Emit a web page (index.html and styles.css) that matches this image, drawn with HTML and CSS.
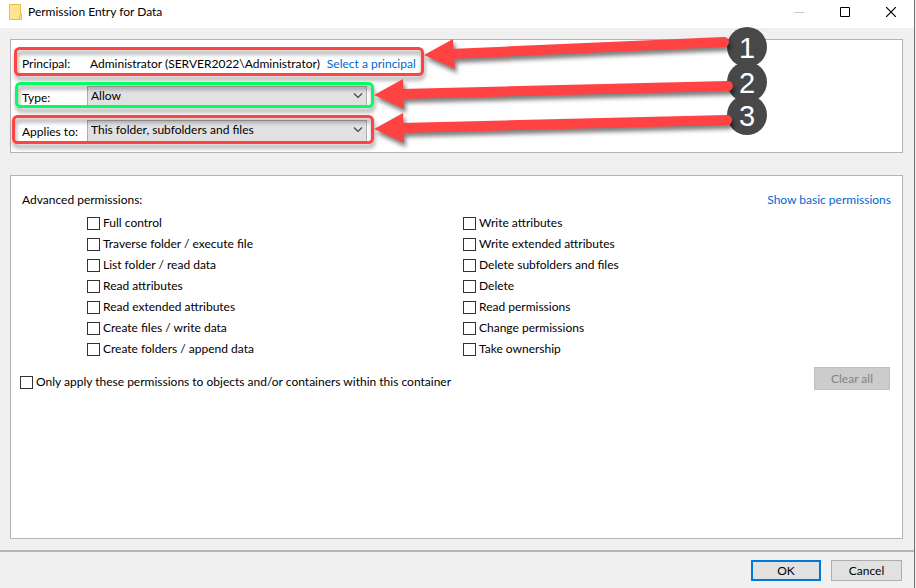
FILE: index.html
```html
<!DOCTYPE html>
<html lang="en">
<head>
  <meta charset="UTF-8" />
  <title>Permission Entry for Data</title>
  <link rel="stylesheet" href="styles.css">
</head>
<body>
  <div class="window">
    <header class="titlebar">
      <svg class="titlebar__icon" width="14" height="17" viewBox="0 0 14 17">
        <path d="M.5.5h11v9h1v6H.5z" fill="#ffe391" stroke="#e8c04c" />
        <path d="M10.5 15.5v-4l2-2v6z" fill="#ffe391" stroke="#e8c04c" />
      </svg>
      <h1 class="titlebar__text">Permission Entry for Data</h1>
      <div class="titlebar__controls">
        <button class="control" aria-label="Minimize" disabled>
          <svg width="10" height="10"><path d="M0 5.5h10" stroke="#ccc" /></svg>
        </button>
        <button class="control" aria-label="Maximize">
          <svg width="10" height="10"><path d="M.5.5h9v9h-9z" fill="none" stroke="#000" /></svg>
        </button>
        <button class="control" aria-label="Close">
          <svg width="10" height="10"><path d="M0 0l10 10M10 0L0 10" stroke="#000" stroke-width="1.2" /></svg>
        </button>
      </div>
    </header>

    <main class="content">
      <section class="panel entry">
        <div class="entry__row">
          <span class="entry__label">Principal:</span>
          <span class="entry__name">Administrator (SERVER2022\Administrator)</span>
          <a class="link" href="#">Select a principal</a>
        </div>
        <div class="entry__row">
          <label class="entry__label" for="type">Type:</label>
          <div class="dropdown">
            <select id="type">
              <option>Allow</option>
              <option>Deny</option>
            </select>
            <svg class="dropdown__arrow" width="10" height="6"><path d="M1 .5l4 4 4-4" fill="none" stroke="#444" stroke-width="1.2" /></svg>
          </div>
        </div>
        <div class="entry__row">
          <label class="entry__label" for="applies">Applies to:</label>
          <div class="dropdown">
            <select id="applies">
              <option>This folder, subfolders and files</option>
            </select>
            <svg class="dropdown__arrow" width="10" height="6"><path d="M1 .5l4 4 4-4" fill="none" stroke="#444" stroke-width="1.2" /></svg>
          </div>
        </div>
      </section>

      <section class="panel permissions">
        <div class="permissions__head">
          <h2 class="permissions__title">Advanced permissions:</h2>
          <a class="link" href="#">Show basic permissions</a>
        </div>
        <div class="permissions__grid">
          <div class="permissions__column">
            <label class="check"><input type="checkbox">Full control</label>
            <label class="check"><input type="checkbox">Traverse folder / execute file</label>
            <label class="check"><input type="checkbox">List folder / read data</label>
            <label class="check"><input type="checkbox">Read attributes</label>
            <label class="check"><input type="checkbox">Read extended attributes</label>
            <label class="check"><input type="checkbox">Create files / write data</label>
            <label class="check"><input type="checkbox">Create folders / append data</label>
          </div>
          <div class="permissions__column">
            <label class="check"><input type="checkbox">Write attributes</label>
            <label class="check"><input type="checkbox">Write extended attributes</label>
            <label class="check"><input type="checkbox">Delete subfolders and files</label>
            <label class="check"><input type="checkbox">Delete</label>
            <label class="check"><input type="checkbox">Read permissions</label>
            <label class="check"><input type="checkbox">Change permissions</label>
            <label class="check"><input type="checkbox">Take ownership</label>
          </div>
        </div>
        <div class="permissions__foot">
          <label class="check"><input type="checkbox">Only apply these permissions to objects and/or containers within this container</label>
          <button class="button button--clear" disabled>Clear all</button>
        </div>
      </section>
    </main>

    <footer class="footer">
      <button class="button button--default">OK</button>
      <button class="button">Cancel</button>
    </footer>
  </div>

  <!-- Callouts drawn over the dialog -->
  <svg class="callouts" width="780" height="160" viewBox="0 0 780 160">
    <g class="callouts__box">
      <rect x="15.5" y="48.5" width="407" height="26" rx="4" stroke="#ff4343" />
      <rect x="16.5" y="83.5" width="356" height="23" rx="4" stroke="#00ff60" />
      <rect x="13.5" y="116.5" width="359" height="26" rx="4" stroke="#ff4343" />
    </g>
    <g class="callouts__badge">
      <circle cx="747" cy="47" r="20" />
      <circle cx="747" cy="82" r="20" />
      <circle cx="747" cy="115" r="20" />
    </g>
    <g class="callouts__number">
      <text x="747" y="58">1</text>
      <text x="747" y="93">2</text>
      <text x="747" y="126">3</text>
    </g>
    <g class="callouts__arrow">
      <path d="M450 54L724 42" />
      <path class="callouts__head" d="M424 55L453 39 455 69z" />
      <path d="M400 94L728 86" />
      <path class="callouts__head" d="M374 95L403 79 404 109z" />
      <path d="M400 128L727 120" />
      <path class="callouts__head" d="M374 129L403 113 404 143z" />
    </g>
  </svg>
</body>
</html>
```
FILE: styles.css
```css
* {
  box-sizing: border-box;
}

body {
  margin: 0;
  background: #f0f0f0;
  font: 12px/16px Lato, "Open Sans", sans-serif;
  color: #000;
}

.window {
  display: flex;
  flex-direction: column;
  min-height: 100vh;
  margin-right: 1px;
  border-right: 1px solid #707070;
  background: #f0f0f0;
}

/* Title bar */
.titlebar {
  display: flex;
  align-items: center;
  height: 28px;
  padding: 0 9px 4px;
  background: #fff;
}
.titlebar__text {
  flex: 1;
  margin: 0 0 0 5px;
  font-size: 12px;
  font-weight: normal;
}
.titlebar__controls {
  display: flex;
  margin-right: -9px;
}
.control {
  display: flex;
  align-items: center;
  justify-content: center;
  width: 46px;
  height: 24px;
  padding: 0;
  border: 0;
  background: none;
}

/* Panels */
.content {
  flex: 1;
  display: flex;
  flex-direction: column;
  gap: 22px;
  padding: 11px 11px 11px 10px;
}
.panel {
  border: 1px solid #b4b4b4;
  background: #fff;
}

.entry {
  padding: 12px 11px 8px;
}
.entry__row {
  display: flex;
  align-items: center;
  height: 24px;
}
.entry__row + .entry__row {
  margin-top: 10px;
}
.entry__label {
  width: 65px;
}
.entry__name {
  margin: 0 7px 0 3px;
}
.link {
  color: #0066cc;
  text-decoration: none;
}

.dropdown {
  position: relative;
  width: 280px;
  margin-bottom: 2px;
}
.dropdown select {
  display: block;
  appearance: none;
  width: 100%;
  height: 22px;
  padding: 0 24px 2px 3px;
  border: 1px solid #adadad;
  border-radius: 0;
  background: #e1e1e1;
  font: inherit;
  color: inherit;
}
.dropdown__arrow {
  position: absolute;
  top: 7px;
  right: 4px;
  pointer-events: none;
}

.permissions {
  flex: 1;
  padding: 16px 11px;
}
.permissions__head {
  display: flex;
  justify-content: space-between;
}
.permissions__title {
  margin: 0;
  font-size: 12px;
  font-weight: normal;
}
.permissions__grid {
  display: flex;
  padding: 4px 0 0 65px;
}
.permissions__column {
  width: 376px;
}
.permissions__foot {
  display: flex;
  justify-content: space-between;
  align-items: flex-start;
  margin: 8px 1px 0 -2px;
}

.check {
  display: flex;
  align-items: center;
  gap: 3px;
  height: 21px;
}
.permissions__foot .check {
  margin-top: 4px;
}
.check input {
  appearance: none;
  flex: none;
  width: 13px;
  height: 13px;
  margin: 2px 0 0;
  border: 1px solid #333;
  background: #fff;
}

/* Buttons */
.footer {
  display: flex;
  justify-content: flex-end;
  gap: 10px;
  padding: 8px 12px 7px;
  border-top: 2px solid #b4b4b4;
}
.button {
  width: 71px;
  height: 21px;
  padding: 0;
  border: 1px solid #adadad;
  background: #e1e1e1;
  font: inherit;
  color: #000;
}
.button--default {
  width: 70px;
  border: 2px solid #0078d7;
}
.button--clear {
  width: 76px;
  height: 23px;
  border-color: #bfbfbf;
  background: #ccc;
  color: #838383;
}

/* Numbered callouts */
.callouts {
  position: absolute;
  top: 0;
  left: 0;
  pointer-events: none;
}
.callouts__box {
  fill: none;
  stroke-width: 3;
  filter: drop-shadow(1px 4px 2px rgba(0, 0, 0, 0.4));
}
.callouts__badge {
  fill: #484848;
}
.callouts__number {
  fill: #fff;
  font: 29px "Liberation Sans", sans-serif;
  text-anchor: middle;
}
.callouts__arrow {
  fill: none;
  stroke: #ff4343;
  stroke-width: 10;
  stroke-linecap: round;
  filter: drop-shadow(2px 4px 2px rgba(0, 0, 0, 0.5));
}
.callouts__head {
  fill: #ff4343;
  stroke: none;
}
```
